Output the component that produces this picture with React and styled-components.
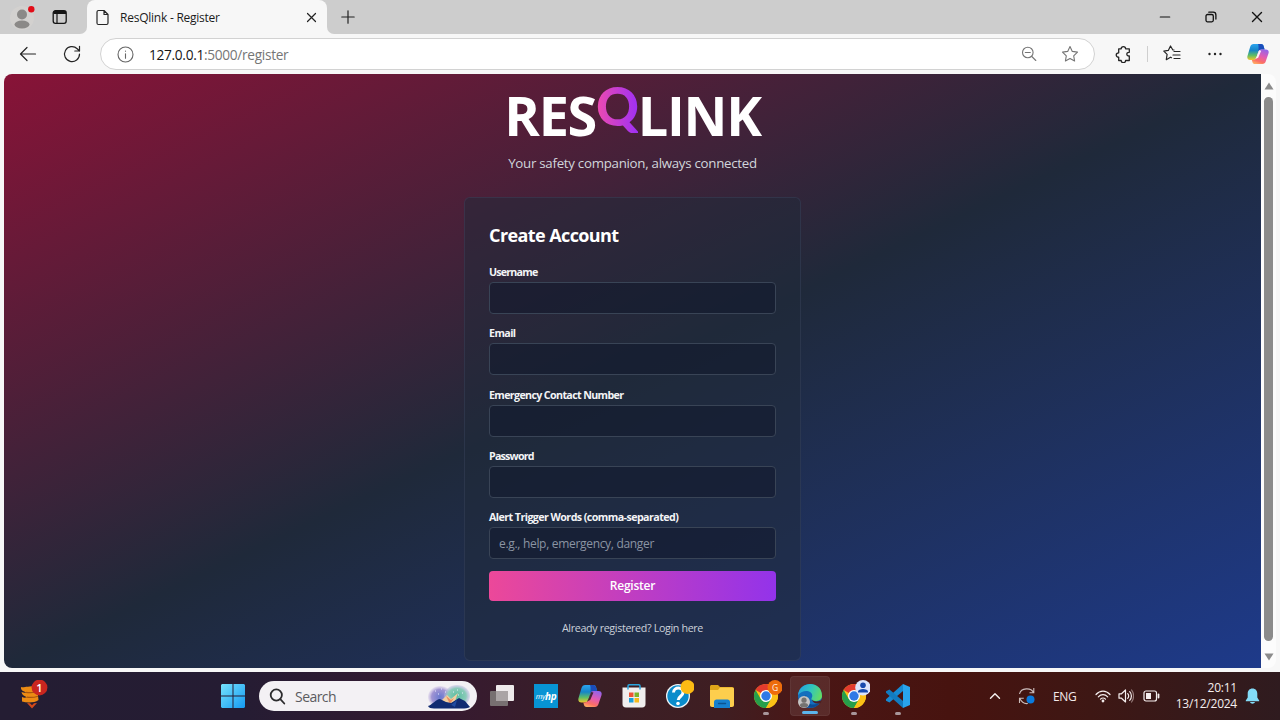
import React from "react";
import styled, { createGlobalStyle } from "styled-components";

const GlobalStyle = createGlobalStyle`
  *, *::before, *::after { box-sizing: border-box; }
  html, body { margin: 0; padding: 0; overflow: hidden; }
  body { font-family: "Open Sans", "Noto Sans", sans-serif; background: #f7f7f7; }
  svg { display: block; flex: none; }
`;

const Desktop = styled.div`
  width: 1280px;
  height: 720px;
  display: flex;
  flex-direction: column;
  background: #f7f7f7;
  overflow: hidden;
`;

/* Browser chrome */
const TabStrip = styled.header`
  height: 34px;
  flex: none;
  display: flex;
  align-items: center;
  background: #cdcdcd;
`;
const Gap = styled.span`
  flex: ${(p) => (p.$w ? "none" : "1")};
  width: ${(p) => p.$w || 0}px;
`;
const TabLead = styled.div`
  width: 87px;
  height: 34px;
  display: flex;
  align-items: center;
  padding-left: 10px;
  gap: 17px;
  border-bottom-right-radius: 7px;
  background: #cdcdcd;
`;
const TabTail = styled.div`
  flex: 1;
  height: 34px;
  display: flex;
  align-items: center;
  padding: 0 17px 0 14px;
  border-bottom-left-radius: 7px;
  background: #cdcdcd;
`;
const TabUnderlay = styled.div`
  flex: 1;
  display: flex;
  background: #f7f7f7;
`;
const TabCell = styled.div`
  width: 240px;
  height: 34px;
  background: #cdcdcd;
`;
const Tab = styled.div`
  height: 34px;
  display: flex;
  align-items: center;
  padding: 0 9px 0 9px;
  background: #f7f7f7;
  border-radius: 8px 8px 0 0;
`;
const TabTitle = styled.span`
  flex: 1;
  margin-left: 11px;
  font-size: 12px;
  letter-spacing: -0.24px;
  color: #1c1c1c;
  white-space: nowrap;
`;
const Toolbar = styled.div`
  height: 40px;
  flex: none;
  display: flex;
  align-items: center;
  padding: 0 11px 0 19px;
`;
const AddressBar = styled.div`
  width: 995px;
  height: 32px;
  margin-left: 18px;
  display: flex;
  align-items: center;
  padding: 0 15px 0 16px;
  background: #fff;
  border: 1px solid #d2d2d2;
  border-radius: 16px;
`;
const Url = styled.span`
  flex: 1;
  margin-left: 15px;
  font-size: 13.7px;
  letter-spacing: -0.31px;
  color: #767676;
  white-space: nowrap;
  b { font-weight: 400; color: #161616; }
`;
const Divider = styled.span`
  width: 1px;
  height: 16px;
  background: #cfcfcf;
`;

/* Web page */
const Viewport = styled.div`
  height: 594px;
  flex: none;
  display: flex;
  margin: 0 4px;
`;
const Page = styled.main`
  width: 1257px;
  height: 594px;
  display: flex;
  flex-direction: column;
  align-items: center;
  padding-top: 9px;
  border-radius: 8px 0 0 8px;
  background: linear-gradient(to bottom right, #881337, #1f293a, #1e3a8a);
`;
const Scrollbar = styled.aside`
  width: 15px;
  display: flex;
  flex-direction: column;
  align-items: center;
  justify-content: space-between;
  padding: 8px 0 7px;
  background: #fcfcfc;
  border-radius: 0 8px 8px 0;
`;
const Thumb = styled.div`
  width: 9px;
  flex: 1;
  margin: 7px 0 12px;
  border-radius: 5px;
  background: #8b8b8b;
`;
const Brand = styled.h1`
  margin: 0;
  height: 64px;
  line-height: 64px;
  font-size: 54px;
  font-weight: 700;
  letter-spacing: -1.3px;
  color: #fff;
  white-space: nowrap;
`;
const BrandQ = styled.span`
  display: inline-block;
  font-family: "Lato", sans-serif;
  font-weight: 900;
  font-size: 53px;
  transform: translateY(-10px);
  background: linear-gradient(to right, #ee4bae, #9f30f4);
  background-clip: text;
  -webkit-background-clip: text;
  color: transparent;
`;
const Tagline = styled.p`
  margin: 6px 0 0;
  height: 20px;
  line-height: 20px;
  font-size: 13.3px;
  letter-spacing: -0.28px;
  color: #d1d5db;
  white-space: nowrap;
`;
const Card = styled.section`
  width: 337px;
  height: 464px;
  margin-top: 24px;
  padding: 24px 24px 0;
  background: rgba(31, 41, 58, 0.5);
  border: 1px solid rgba(75, 85, 120, 0.28);
  border-radius: 6px;
`;
const CardTitle = styled.h2`
  margin: 0 0 15px;
  height: 27px;
  line-height: 26px;
  font-size: 18px;
  font-weight: 700;
  letter-spacing: -0.59px;
  color: #fff;
`;
const Field = styled.label`
  display: block;
  height: 61.33px;
`;
const FieldLabel = styled.span`
  display: block;
  height: 18px;
  line-height: 16px;
  font-size: 10.7px;
  font-weight: 700;
  letter-spacing: ${(p) => p.$track}px;
  color: #f3f4f6;
  white-space: nowrap;
`;
const Input = styled.input`
  display: block;
  width: 100%;
  height: 32px;
  padding: 0 9px;
  font: 400 12px "Open Sans", "Noto Sans", sans-serif;
  letter-spacing: -0.31px;
  color: #fff;
  background: rgba(17, 24, 44, 0.55);
  border: 1px solid #394456;
  border-radius: 4px;
  outline: none;
  &::placeholder { color: #8b94a3; opacity: 1; }
`;
const Submit = styled.button`
  display: block;
  width: 100%;
  height: 30.5px;
  padding: 0;
  border: 0;
  border-radius: 4px;
  font: 600 12px "Open Sans", "Noto Sans", sans-serif;
  letter-spacing: -0.25px;
  color: #fff;
  background: linear-gradient(to right, #ec4899, #9333ea);
`;
const LoginNote = styled.p`
  margin: 19px 0 0;
  line-height: 16px;
  text-align: center;
  font-size: 10.7px;
  letter-spacing: -0.34px;
  color: #cbd1da;
`;

/* Taskbar */
const Taskbar = styled.footer`
  height: 48px;
  margin-top: 4px;
  flex: none;
  display: flex;
  align-items: center;
  background: linear-gradient(to right, #241d33 0, #251c33 240px, #361a30 450px, #3a1f26 600px, #3f1e22 720px, #4a1615 810px, #47130f 950px, #3e1714 1090px, #2f1b1f 1280px);
`;
const SearchBox = styled.div`
  width: 218px;
  height: 30px;
  margin-left: 14px;
  display: flex;
  align-items: center;
  padding: 0 6px 0 10px;
  border-radius: 15px;
  background: #f3f1f4;
`;
const SearchText = styled.span`
  flex: 1;
  margin-left: 9px;
  font-size: 14px;
  letter-spacing: -0.55px;
  color: #5b5b5e;
`;
const TaskButton = styled.div`
  position: relative;
  width: ${(p) => (p.$active ? 40 : 44)}px;
  margin: ${(p) => (p.$active ? "0 2px" : 0)};
  height: 40px;
  display: flex;
  align-items: center;
  justify-content: center;
  border-radius: 4px;
  background: ${(p) => (p.$active ? "rgba(255,255,255,0.09)" : "none")};
  border: ${(p) => (p.$active ? "1px solid rgba(255,255,255,0.05)" : "0")};
`;
const RunMark = styled.span`
  position: absolute;
  bottom: 1px;
  left: 50%;
  width: ${(p) => (p.$active ? 16 : 6)}px;
  height: 3px;
  transform: translateX(-50%);
  border-radius: 2px;
  background: ${(p) => (p.$active ? "#5cb4ec" : "#a8969a")};
`;
const HpTile = styled.span`
  width: 24px;
  height: 24px;
  display: flex;
  align-items: center;
  justify-content: center;
  background: #0794d4;
  color: #fff;
  font-size: 7.5px;
  font-style: italic;
  letter-spacing: -0.4px;
  b { font-size: 10px; }
`;
const Tray = styled.div`
  flex: 1;
  display: flex;
  align-items: center;
  justify-content: flex-end;
  padding-right: 20px;
`;
const Lang = styled.span`
  width: 24px;
  margin: 0 18px 0 17px;
  font-size: 12px;
  letter-spacing: -0.3px;
  color: #f3e9e9;
`;
const Clock = styled.div`
  width: 62px;
  margin: 0 8px 0 15px;
  display: flex;
  flex-direction: column;
  align-items: flex-end;
  font-size: 12px;
  line-height: 16px;
  letter-spacing: -0.24px;
  color: #f5eeee;
  white-space: nowrap;
`;
const NewsButton = styled.div`
  width: 221px;
  padding-left: 19px;
`;

const Stroke = ({ w = 20, h, vb, c = "#252525", sw = 1.2, children }) => (
  <svg width={w} height={h || w} viewBox={vb || `0 0 ${w} ${h || w}`} fill="none" stroke={c} strokeWidth={sw} strokeLinecap="round" strokeLinejoin="round">
    {children}
  </svg>
);

const Avatar = () => (
  <svg width="25" height="26" viewBox="0 0 25 26">
    <circle cx="12" cy="14" r="12" fill="#d3d1cf" />
    <circle cx="12" cy="10.500" r="5" fill="#8b8987" />
    <ellipse cx="12" cy="20.500" rx="7.500" ry="4" fill="#8b8987" />
    <circle cx="21.300" cy="5.200" r="3.200" fill="#e20c17" />
  </svg>
);

const CopilotIcon = ({ id, size = 24 }) => (
  <svg width={size} height={size} viewBox="0 0 24 24">
    <defs>
      <linearGradient id={`${id}a`} x1="0" y1="0" x2="0" y2="1">
        <stop offset="0" stopColor="#2ba4ee" /><stop offset=".4" stopColor="#1685c8" />
        <stop offset=".72" stopColor="#61bd64" /><stop offset="1" stopColor="#f1c72d" />
      </linearGradient>
      <linearGradient id={`${id}b`} x1=".7" y1="0" x2=".3" y2="1">
        <stop offset="0" stopColor="#9563e8" /><stop offset=".45" stopColor="#e35bb2" />
        <stop offset=".8" stopColor="#fb6f65" /><stop offset="1" stopColor="#ffaa63" />
      </linearGradient>
    </defs>
    <path d="M7.200 1h8.200c1.400 0 2.200.8 2.600 2l1.200 4h-3.700c-1.700 0-2.500.9-3 2.400l-2.300 6.600c-.7 2-1.700 2.500-3.700 2.500H3.500C.7 18.500-.2 16.500.6 13.800L3.500 4C4.200 2 5.200 1 7.200 1Z" fill={`url(#${id}a)`} />
    <path d="M12 1h3.400c1.400 0 2.200.8 2.600 2l1.200 4h-3.700c-1.600 0-2.400.8-2.900 2.200C12.500 6 13 3 12 1Z" fill="#1b4dbb" />
    <path d="M16.800 23H8.600c-1.400 0-2.200-.8-2.600-2l-.7-2.500h1.200c2 0 3.400-1 4-3l2-6C13 7.800 13.900 7 15.500 7h5c2.800 0 3.700 2 2.900 4.500L20.500 20c-.7 2-1.700 3-3.700 3Z" fill={`url(#${id}b)`} />
    {id === "bar" && <path d="M13.200 8 15.500 8.500 12.200 16 9 17.500 10.500 15Z" fill="#fff" opacity=".9" />}
    {id === "task" && <path d="M13.200 8 15.500 8.500 12.200 16 9 17.500 10.500 15Z" fill="#3a1f26" opacity=".9" />}
  </svg>
);

const ChromeIcon = ({ badge }) => (
  <svg width="32" height="32" viewBox="0 0 32 32">
    <circle cx="16" cy="16" r="12" fill="#fbc116" />
    <path d="M16 16 5.600 10A12 12 0 0 1 26.400 10Z" fill="#e33b2e" />
    <path d="M5.600 10A12 12 0 0 0 16 28L21.200 19 16 16 10.800 19Z" fill="#269f4b" />
    <path d="M16 10h10.400A12 12 0 0 1 16 28l5.200-9Z" fill="#fbc116" />
    <circle cx="16" cy="16" r="6" fill="#fff" />
    <circle cx="16" cy="16" r="4.700" fill="#3079e6" />
    {badge === "G" ? (
      <>
        <circle cx="25" cy="7.500" r="7.500" fill="#ee6c0b" />
        <text x="25" y="10.500" textAnchor="middle" fontSize="8.500" fill="#fff1e5" fontFamily="Open Sans">G</text>
      </>
    ) : (
      <>
        <circle cx="25" cy="7.800" r="7.800" fill="#dbe5fb" />
        <circle cx="25" cy="5.300" r="2.800" fill="#174bae" />
        <path d="M20 12.500v-1c0-3.400 10-3.400 10 0v1Z" fill="#174bae" />
      </>
    )}
  </svg>
);

const EdgeIcon = () => (
  <svg width="26" height="26" viewBox="0 0 26 26">
    <defs>
      <linearGradient id="edgeTop" x1="0" y1=".3" x2="1" y2=".6">
        <stop offset="0" stopColor="#24a3df" /><stop offset=".5" stopColor="#31c6bd" /><stop offset="1" stopColor="#66dc61" />
      </linearGradient>
    </defs>
    <circle cx="13" cy="13" r="12" fill="#146fbd" />
    <path d="M1 12C2.500-2.500 25-3 25 13c0 5-7 6.500-10 4-1.500-1.300.3-2 .3-4.200C15.300 7.500 6 6 1 12Z" fill="url(#edgeTop)" />
    <path d="M9.500 12c-2 4 1 9.500 7 9.500 2.500 0 4.500-.7 6.200-1.700C18 27.500 6 26 6.500 16.500c.1-2 1-3.500 3-4.500Z" fill="#0b4b94" />
    <path d="M15 16.500c2 2.800 7 2.200 10 .2l-1.200 3.200c-4 1.300-8 .6-8.800-3.400Z" fill="#4d2022" />
    <circle cx="7" cy="19" r="6" fill="#c5c4c3" />
    <circle cx="7" cy="17.200" r="2.600" fill="#747370" />
    <ellipse cx="7" cy="22.300" rx="4" ry="2.200" fill="#747370" />
  </svg>
);

const NewsIcon = () => (
  <svg width="30" height="32" viewBox="0 0 30 32">
    <path d="M2 7c3 1 6-1 16-1l1.500 14c-4 3-11.500 3-16.500 1.500v-4.500c2 1 3.500.7 5 .2C5 16 3 15 2.500 12c2 .8 4 .8 5 .3C4 11.500 1.500 10 2 7Z" fill="#ec8b14" />
    <path d="M7 12.300c4 1 8 .2 12-.3M8 17.200c4 .5 7 .3 11-1" stroke="#a9560e" strokeWidth="1.200" fill="none" />
    <path d="M8 23 13 28.500 18 23l-3 .2-2 2-2-2Z" fill="#d34a1b" />
    <circle cx="20.500" cy="7.500" r="7.900" fill="#c9261f" />
    <text x="20.300" y="11.500" textAnchor="middle" fontSize="11" fill="#fff" fontFamily="Open Sans" fontWeight="600">1</text>
  </svg>
);

const WindowsIcon = () => (
  <svg width="24" height="24" viewBox="0 0 24 24">
    <defs>
      <linearGradient id="win" gradientUnits="userSpaceOnUse" x1="0" y1="0" x2="24" y2="24">
        <stop offset="0" stopColor="#76e3fd" /><stop offset="1" stopColor="#1499f1" />
      </linearGradient>
    </defs>
    <path d="M1 0h10.500v11.500H0V1ZM12.500 0H23l1 1v10.500H12.500ZM0 12.500h11.500V24H1l-1-1ZM12.500 12.500H24V23l-1 1H12.500Z" fill="url(#win)" />
  </svg>
);

const SearchArt = () => (
  <svg width="44" height="26" viewBox="0 0 44 26">
    <defs>
      <radialGradient id="artL"><stop offset="0" stopColor="#6979cf" /><stop offset=".7" stopColor="#a094d3" /><stop offset="1" stopColor="#c8b9e2" stopOpacity=".3" /></radialGradient>
      <radialGradient id="artR"><stop offset="0" stopColor="#5bbd9f" /><stop offset=".7" stopColor="#8acbb9" /><stop offset="1" stopColor="#b7b2df" stopOpacity=".4" /></radialGradient>
    </defs>
    <ellipse cx="13" cy="14" rx="12" ry="11" fill="url(#artL)" />
    <ellipse cx="30" cy="13" rx="13" ry="11" fill="url(#artR)" />
    <path d="m12 20 8-8 4 4 7-6-3 8 5 3Z" fill="#f3cda0" />
    <path d="m19 13 5 4 3-2-4 6Z" fill="#e98d5f" />
    <path d="M1 23c4-1 8-7 12-7l6 3 5 1 8-5 6 3 5 6c-2 1-5 1.500-8 1.500H7c-3 0-5-.7-6-2.500Z" fill="#112b72" />
    <path d="m19 19 5 3 6-5-2 7Z" fill="#214aa0" />
    <path d="M8 8h1M14 6h1M11 11h1M18 9h1M30 7h1M35 10h1M26 9h1M31 12h1" stroke="#e7efff" strokeWidth="1" />
  </svg>
);

const TaskViewIcon = () => (
  <svg width="24" height="24" viewBox="0 0 24 24">
    <rect x="6" y="1" width="18" height="16" rx="1" fill="#eeeaeb" />
    <rect x="0" y="7" width="18" height="15" rx="1" fill="#777071" />
    <path d="M6 7h12v10H6Z" fill="#aaa4a5" />
  </svg>
);

const StoreIcon = () => (
  <svg width="24" height="24" viewBox="0 0 24 24">
    <path d="M.5 3.500h23V20c0 2.300-1 3.500-3.500 3.500H4C1.500 23.500.5 22.300.5 20Z" fill="#f0eeee" />
    <path d="M6 5.500V2c0-.8.4-1.200 1.200-1.200h9.600c.8 0 1.200.4 1.200 1.200v3.500" fill="none" stroke="#2aa6df" strokeWidth="1.500" />
    <path d="M7 8.500h4.500V13H7Z" fill="#ee5536" /><path d="M12.500 8.500H17V13h-4.500Z" fill="#7db52a" />
    <path d="M7 14h4.500v4.500H7Z" fill="#199fdb" /><path d="M12.500 14H17v4.500h-4.500Z" fill="#f6b91b" />
  </svg>
);

const HelpIcon = () => (
  <svg width="32" height="32" viewBox="0 0 32 32">
    <circle cx="16" cy="16" r="12" fill="#f0f5f8" />
    <circle cx="16" cy="16" r="10.700" fill="#0a8ccb" />
    <path d="M11.500 12.500c.3-6 9.700-5.800 9.500 0-.1 3.700-4.500 3.700-4.800 7.500" stroke="#fff" strokeWidth="3" fill="none" />
    <circle cx="16" cy="23.500" r="1.800" fill="#fff" />
    <circle cx="25.500" cy="7" r="7" fill="#fdbb13" />
  </svg>
);

const FolderIcon = () => (
  <svg width="24" height="24" viewBox="0 0 24 24">
    <path d="M0 3c0-1.500.5-2 2-2h6l2 2h12c1.500 0 2 .7 2 2v4H0Z" fill="#dfa419" />
    <path d="M0 6h8l2-2.500h12c1.500 0 2 .7 2 2V21c0 1.300-.7 2-2 2H2c-1.300 0-2-.7-2-2Z" fill="#fdce4d" />
    <path d="M4 24v-6c0-1.500 1-2.500 2.500-2.500h11c1.500 0 2.500 1 2.500 2.500v6Z" fill="#1680ce" />
    <path d="M8.500 19.500h7" stroke="#0c5390" strokeWidth="1.400" strokeLinecap="round" />
  </svg>
);

const CodeIcon = () => (
  <svg width="24" height="24" viewBox="0 0 24 24">
    <path d="M17 0 24 3v18l-7 3Z" fill="#29a4ed" />
    <path d="M17 0v7L3.500 18.500 0 16.700v-1.500Z" fill="#1689d2" />
    <path d="M17 24v-7L3.500 5.500 0 7.300v1.500Z" fill="#127bc0" />
  </svg>
);

const SyncIcon = () => (
  <svg width="18" height="18" viewBox="0 0 18 18" fill="none" stroke="#cbbdbc" strokeWidth="1.100">
    <path d="M1.500 7C3 .5 13 .3 15.500 5.500M15.800 1v4.800H11.500M1.500 16v-4.800h4.300M1.800 11.500c2 4 5 5.500 8 5" />
    <circle cx="12.500" cy="12.500" r="4" fill="#0a7bde" stroke="none" />
  </svg>
);

const fields = [
  { label: "Username", track: -0.8 },
  { label: "Email", track: -0.6 },
  { label: "Emergency Contact Number", track: -0.65 },
  { label: "Password", track: -0.8 },
  { label: "Alert Trigger Words (comma-separated)", track: -0.57, placeholder: "e.g., help, emergency, danger" },
];

export default function App() {
  return (
    <Desktop>
      <GlobalStyle />
      <TabStrip>
        <TabUnderlay>
          <TabLead>
            <Avatar />
            <svg width="16" height="16" viewBox="0 0 16 16" fill="none" stroke="#151515">
              <rect x="1.200" y="1.700" width="13" height="12.600" rx="2.200" strokeWidth="1.300" />
              <path d="M1.500 3.500h12.500" strokeWidth="3" /><path d="M5 4v10" strokeWidth="1.200" />
            </svg>
          </TabLead>
          <TabCell>
            <Tab>
              <Stroke w={13} h={17}>
                <path d="M2.500 1.500H8l4 4V14c0 1-.5 1.500-1.500 1.500h-8C1.500 15.500 1 15 1 14V3c0-1 .5-1.500 1.500-1.500ZM8 1.500V5.500h4" />
              </Stroke>
              <TabTitle>ResQlink - Register</TabTitle>
              <Stroke w={13} c="#222"><path d="m2.500 2.500 8 8M10.500 2.500l-8 8" /></Stroke>
            </Tab>
          </TabCell>
          <TabTail>
            <Stroke w={14} c="#222"><path d="M7 .8v12.400M.8 7h12.400" /></Stroke>
            <Gap />
            <Stroke w={12} c="#111"><path d="M1.300 6h9.400" /></Stroke>
            <Gap $w={34} />
            <Stroke w={12} c="#111" sw={1.3}><rect x="1" y="3.500" width="7.300" height="7.300" rx="1.500" /><path d="M3.800 1.200h4.400c1.700 0 2.700 1 2.700 2.700v4.200" /></Stroke>
            <Gap $w={34} />
            <Stroke w={12} c="#111" sw={1.4}><path d="m1.500 1.500 9 9M10.500 1.500l-9 9" /></Stroke>
          </TabTail>
        </TabUnderlay>
      </TabStrip>

      <Toolbar>
        <Stroke w={18}><path d="M16.500 9h-15M8 2.500 1.500 9 8 15.500" /></Stroke>
        <Gap $w={25} />
        <Stroke w={20}><path d="M17.500 10a7.500 7.500 0 1 1-2.300-5.300L17.500 7M17.500 2.300V7h-4.700" /></Stroke>
        <AddressBar>
          <Stroke w={17} c="#666" sw={1.1}><circle cx="8.500" cy="8.500" r="7.500" /><path d="M8.500 7.700v4.500M8.500 5v.3" /></Stroke>
          <Url><b>127.0.0.1</b>:5000/register</Url>
          <Stroke w={16} c="#757575" sw={1.1}><circle cx="6.800" cy="6.500" r="5.300" /><path d="m10.800 10.500 4 4M4.300 6.500h5" /></Stroke>
          <Gap $w={24} />
          <Stroke w={18} c="#757575" sw={1.1}><path d="m9 1.500 2.300 4.900 5.200.7-3.800 3.700.9 5.200L9 13.500 4.400 16l.9-5.200-3.800-3.700 5.200-.7Z" /></Stroke>
        </AddressBar>
        <Gap $w={20} />
        <Stroke w={18} sw={1.3}><path d="M3.700 3.800h2.500a2.200 2.200 0 0 1 4.400 0h3.700v3.500c-3.300-.3-3.300 4 0 3.700v4.500h-3.700a2.200 2.200 0 0 1-4.400 0H3.700v-3.300c-3.300 0-3.300-4.400 0-4.400Z" /></Stroke>
        <Gap $w={14} />
        <Divider />
        <Gap $w={15} />
        <Stroke w={18}><path d="m11 5-1.300-.2L7.500 1 5.300 5.400.8 6.100l3.300 3.300-.8 5.300 4.200-2.500 1 .5M11 6.500h6M10 10h7M11 13.500h6" /></Stroke>
        <Gap $w={26} />
        <svg width="16" height="6" viewBox="0 0 16 6" fill="#222"><circle cx="2.500" cy="3" r="1.200" /><circle cx="8" cy="3" r="1.200" /><circle cx="13.500" cy="3" r="1.200" /></svg>
        <Gap />
        <CopilotIcon id="bar" size={22} />
      </Toolbar>

      <Viewport>
        <Page>
          <Brand>RES<BrandQ>Q</BrandQ>LINK</Brand>
          <Tagline>Your safety companion, always connected</Tagline>
          <Card>
            <CardTitle>Create Account</CardTitle>
            {fields.map((f) => (
              <Field key={f.label}>
                <FieldLabel $track={f.track}>{f.label}</FieldLabel>
                <Input placeholder={f.placeholder} />
              </Field>
            ))}
            <Submit>Register</Submit>
            <LoginNote>Already registered? Login here</LoginNote>
          </Card>
        </Page>
        <Scrollbar>
          <svg width="10" height="8" viewBox="0 0 10 8"><path d="M5 .5 9.500 7.500h-9Z" fill="#8b8b8b" /></svg>
          <Thumb />
          <svg width="10" height="8" viewBox="0 0 10 8"><path d="M5 7.500 9.500.5h-9Z" fill="#8b8b8b" /></svg>
        </Scrollbar>
      </Viewport>

      <Taskbar>
        <NewsButton><NewsIcon /></NewsButton>
        <WindowsIcon />
        <SearchBox>
          <Stroke w={17} c="#2b2b2d" sw={1.8}><circle cx="7.300" cy="7" r="5.600" /><path d="m11.300 11.200 4 4.300" /></Stroke>
          <SearchText>Search</SearchText>
          <SearchArt />
        </SearchBox>
        <Gap $w={3} />
        <TaskButton><TaskViewIcon /></TaskButton>
        <TaskButton><HpTile>my<b>hp</b></HpTile></TaskButton>
        <TaskButton><CopilotIcon id="task" /></TaskButton>
        <TaskButton><StoreIcon /></TaskButton>
        <TaskButton><HelpIcon /></TaskButton>
        <TaskButton><FolderIcon /></TaskButton>
        <TaskButton><ChromeIcon badge="G" /><RunMark /></TaskButton>
        <TaskButton $active><EdgeIcon /><RunMark $active /></TaskButton>
        <TaskButton><ChromeIcon badge="user" /><RunMark /></TaskButton>
        <TaskButton><CodeIcon /><RunMark /></TaskButton>
        <Tray>
          <Stroke w={12} c="#f5eeee" sw={1.4}><path d="m1.500 8.300 4.500-4.600 4.500 4.600" /></Stroke>
          <Gap $w={17} />
          <SyncIcon />
          <Lang>ENG</Lang>
          <Stroke w={16} c="#f5eeee"><path d="M1 6.500C5 2 11 2 15 6.500M3.300 8.900c2.800-3 6.600-3 9.400 0M5.500 11.200c1.500-1.600 3.500-1.600 5 0" /><circle cx="8" cy="13" r=".8" fill="#f5eeee" /></Stroke>
          <Gap $w={7} />
          <Stroke w={16} c="#f5eeee"><path d="M1 5.800h2.500L7.500 2v12l-4-3.800H1ZM9.700 5.600c1.300 1.300 1.300 3.500 0 4.800M11.700 3.700c2.300 2.300 2.300 6.300 0 8.600" /><path d="M13.600 2c2.600 3.300 2.600 8.700 0 12" stroke="#957b79" /></Stroke>
          <Gap $w={9} />
          <Stroke w={17} h={12} c="#f5eeee"><rect x="1" y="1" width="12.500" height="10" rx="2" /><path d="M15.500 4.500v3" strokeWidth="1.800" /><rect x="3" y="3" width="5" height="6" fill="#f5eeee" stroke="none" /></Stroke>
          <Clock><span>20:11</span><span>13/12/2024</span></Clock>
          <svg width="15" height="16" viewBox="0 0 15 16" fill="#83dcf8"><path d="M7.500.5C4.500.5 2.700 2.700 2.700 5.500v4L.8 12.500v.8h13.400v-.8l-1.900-3v-4c0-2.800-1.800-5-4.800-5ZM5 14c.8 2.300 4.200 2.300 5 0Z" /></svg>
        </Tray>
      </Taskbar>
    </Desktop>
  );
}
